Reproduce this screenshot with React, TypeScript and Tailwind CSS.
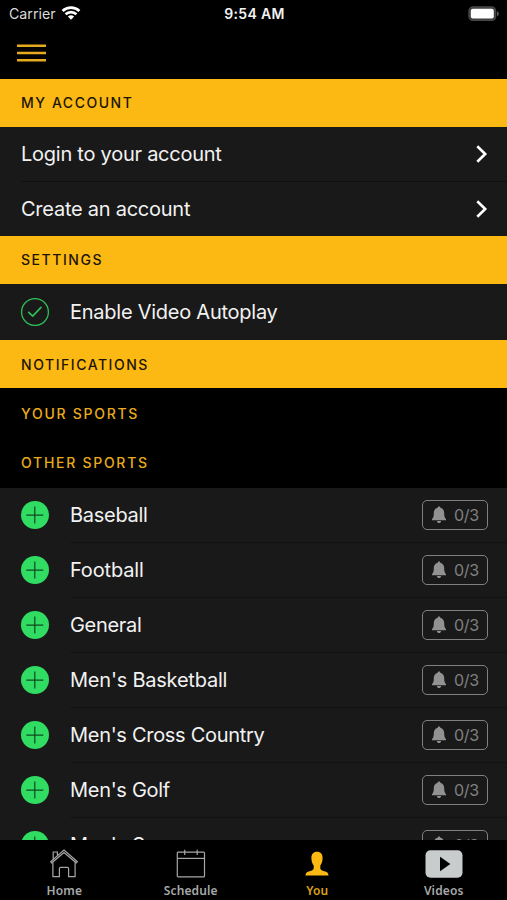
import type { ReactNode } from "react";

const sports = [
  { name: "Baseball", tracking: "tracking-[-0.28px]" },
  { name: "Football", tracking: "tracking-[-0.15px]" },
  { name: "General", tracking: "tracking-[-0.3px]" },
  { name: "Men's Basketball", tracking: "tracking-[-0.22px]" },
  { name: "Men's Cross Country", tracking: "tracking-[-0.3px]" },
  { name: "Men's Golf", tracking: "tracking-[-0.3px]" },
  { name: "Men's Soccer", tracking: "tracking-[-0.25px]" },
];

const WifiIcon = () => (
  <svg width="20" height="16" viewBox="0 0 20 16" fill="none" stroke="#fff" strokeWidth="2.7">
    <path d="M1.6 6 A12.2 12.2 0 0 1 18.4 6" />
    <path d="M4.6 9.3 A7.8 7.8 0 0 1 15.4 9.3" />
    <path d="M10 14.8 L6.9 11.6 A4.5 4.5 0 0 1 13.1 11.6 Z" fill="#fff" stroke="none" />
  </svg>
);

const BatteryIcon = () => (
  <svg width="32" height="16" viewBox="0 0 32 16">
    <rect x="1" y="1" width="26.6" height="13.4" rx="4" fill="#3c3c3e" stroke="#48484a" strokeWidth="1.4" />
    <rect x="2.8" y="2.8" width="23" height="9.8" rx="2" fill="#fff" />
    <path d="M29 5.2 Q30.9 6.1 30.9 7.7 Q30.9 9.3 29 10.2 Z" fill="#58585a" />
  </svg>
);

const ChevronIcon = () => (
  <svg width="12" height="20" viewBox="0 0 12 20" fill="none" stroke="#fff" strokeWidth="2.6">
    <path d="M1.3 2.2 L9.2 10 L1.3 17.8" />
  </svg>
);

const CheckIcon = () => (
  <svg width="28" height="28" viewBox="0 0 28 28" fill="none" stroke="#2fbd57" strokeLinecap="round" strokeLinejoin="round">
    <circle cx="14" cy="14" r="13.4" strokeWidth="1.3" />
    <path d="M7.7 14.4 L11.7 18.2 L20 9.4" strokeWidth="1.7" />
  </svg>
);

const PlusIcon = () => (
  <svg width="28" height="28" viewBox="0 0 28 28">
    <circle cx="14" cy="14" r="14" fill="#30dc62" />
    <path d="M13.8 5.5 V22.5 M5.3 14.2 H22.3" stroke="#0f4a20" strokeWidth="1.2" />
  </svg>
);

const BellIcon = () => (
  <svg width="16" height="18" viewBox="0 0 16 18" fill="#929292">
    <path d="M8 0.6 C8.8 0.6 9.3 1.1 9.3 1.7 C11.9 2.3 13.2 4.4 13.2 7.1 C13.2 10.5 13.6 11.9 15 13.2 V14.3 H1 V13.2 C2.4 11.9 2.8 10.5 2.8 7.1 C2.8 4.4 4.1 2.3 6.7 1.7 C6.7 1.1 7.2 0.6 8 0.6 Z" />
    <path d="M5.9 14.9 H10.1 C9.9 16.3 9.1 17 8 17 C6.9 17 6.1 16.3 5.9 14.9 Z" />
  </svg>
);

const HomeIcon = () => (
  <svg width="30" height="30" viewBox="0 0 30 30" fill="none" stroke="#a6a8a8" strokeWidth="1.2">
    <path d="M1.7 12.6 L15 1 L28.3 12.6 L27.3 13.8 L15 3.6 L2.7 13.8 Z" />
    <path d="M4.2 10.2 V3 H8.4 V6.4" />
    <path d="M3.9 13.3 V27.6 H10.4 V19.6 Q10.4 18.3 11.7 18.3 H18.3 Q19.6 18.3 19.6 19.6 V27.6 H26.1 V13.3" />
  </svg>
);

const CalendarIcon = () => (
  <svg width="30" height="30" viewBox="0 0 30 30" fill="none" stroke="#a6a8a8" strokeWidth="1.2">
    <rect x="1.3" y="3.1" width="27.2" height="24.8" rx="1" />
    <path d="M1.3 9.4 H28.5" />
    <path d="M8.7 0.8 V6 M21.2 0.8 V6" />
  </svg>
);

const PersonIcon = () => (
  <svg width="24" height="26" viewBox="0 0 24 26" fill="#fdb913">
    <path d="M12 0.8 C15.7 0.8 17.6 3.3 17.6 7 C17.6 10.4 16.5 13 15.3 14.6 V17 C15.3 19.2 18 19.9 20.3 20.6 C22.3 21.2 23.3 22.2 23.5 24.4 H0.5 C0.7 22.2 1.7 21.2 3.7 20.6 C6 19.9 8.7 19.2 8.7 17 V14.6 C7.5 13 6.4 10.4 6.4 7 C6.4 3.3 8.3 0.8 12 0.8 Z" />
  </svg>
);

const VideoIcon = () => (
  <svg width="38" height="28" viewBox="0 0 38 28">
    <rect x="0.5" y="0.2" width="37" height="27.6" rx="5" fill="#c9cccc" />
    <path d="M15 6.8 V21.2 L25.4 14 Z" fill="#000" />
  </svg>
);

const SectionHeader = ({ title, className }: { title: string; className?: string }) => (
  <h2
    className={`flex h-[48px] shrink-0 items-center bg-[#fdb913] pl-[21px] text-[14px] font-medium tracking-[1.54px] text-[#1c1504] ${className ?? ""}`}
  >
    {title}
  </h2>
);

const SubHeader = ({ title, className }: { title: string; className?: string }) => (
  <h3
    className={`flex h-[50px] shrink-0 items-center pl-[21px] text-[14px] font-medium tracking-[1.72px] text-[#e8ab1c] ${className ?? ""}`}
  >
    {title}
  </h3>
);

const AccountRow = ({ label }: { label: string }) => (
  <div className="ml-[21px] flex h-[54px] items-center justify-between pr-[19px]">
    <span className="text-[20px] tracking-[-0.25px]">{label}</span>
    <ChevronIcon />
  </div>
);

const Tab = ({ label, icon, className }: { label: string; icon: ReactNode; className: string }) => (
  <div className={`flex w-[126.5px] flex-col items-center ${className}`}>
    <div className="flex h-[43px] items-center pt-1">{icon}</div>
    <span className="text-[12px] leading-[16px] font-semibold tracking-[0.15px]">{label}</span>
  </div>
);

const App = () => {
  return (
    <div className="flex h-[900px] w-[507px] flex-col overflow-hidden bg-black font-['Inter',sans-serif] text-[#f2f2f2]">
      <div className="grid h-[27px] shrink-0 grid-cols-3 items-center pr-[7px] pl-[9px] text-[14.2px]">
        <div className="flex items-center gap-[5px]">
          <span className="text-[#dadada]">Carrier</span>
          <WifiIcon />
        </div>
        <span className="text-center text-[14px] font-semibold tracking-[0.3px]">9:54 AM</span>
        <div className="flex justify-end">
          <BatteryIcon />
        </div>
      </div>

      <div className="flex h-[52px] shrink-0 items-center pb-px pl-[17px]">
        <svg width="29" height="20" viewBox="0 0 29 20" stroke="#e5aa1d" strokeWidth="2.4">
          <path d="M0 2.8 H29 M0 10 H29 M0 17.2 H29" />
        </svg>
      </div>

      <main className="flex min-h-0 flex-1 flex-col overflow-hidden">
        <SectionHeader title="MY ACCOUNT" className="pb-[2px]" />
        <div className="h-[109px] shrink-0 bg-[#191919]">
          <AccountRow label="Login to your account" />
          <div className="ml-[21px] h-px bg-[#111]"></div>
          <AccountRow label="Create an account" />
        </div>

        <SectionHeader title="SETTINGS" className="pb-[2px]" />
        <div className="flex h-[56px] shrink-0 items-center gap-[21px] bg-[#191919] pl-[21px]">
          <CheckIcon />
          <span className="text-[20px] tracking-[-0.25px]">Enable Video Autoplay</span>
        </div>

        <SectionHeader title="NOTIFICATIONS" />
        <SubHeader title="YOUR SPORTS" />
        <SubHeader title="OTHER SPORTS" className="pb-px" />

        <div className="bg-[#191919]">
          {sports.map((sport) => (
            <div key={sport.name} className="flex h-[55px] pl-[21px]">
              <div className="flex w-[49px] items-center pb-px">
                <PlusIcon />
              </div>
              <div className="flex flex-1 items-center justify-between border-b border-[#121212] pr-[19px]">
                <span className={`text-[20px] ${sport.tracking}`}>{sport.name}</span>
                <div className="flex h-[30px] w-[66px] items-center gap-[7px] rounded-[5px] border border-[#808080] pl-[8px] text-[16px] tracking-[-0.3px] text-[#808080]">
                  <BellIcon />
                  <span>0/3</span>
                </div>
              </div>
            </div>
          ))}
        </div>
      </main>

      <nav className="flex h-[60px] shrink-0 bg-black pl-px font-['Noto_Sans',sans-serif]">
        <Tab label="Home" icon={<HomeIcon />} className="text-[#a6a8a8]" />
        <Tab label="Schedule" icon={<CalendarIcon />} className="text-[#a6a8a8]" />
        <Tab label="You" icon={<PersonIcon />} className="text-[#d9a01a]" />
        <Tab label="Videos" icon={<VideoIcon />} className="text-[#a6a8a8]" />
      </nav>
    </div>
  );
};

export default App;
